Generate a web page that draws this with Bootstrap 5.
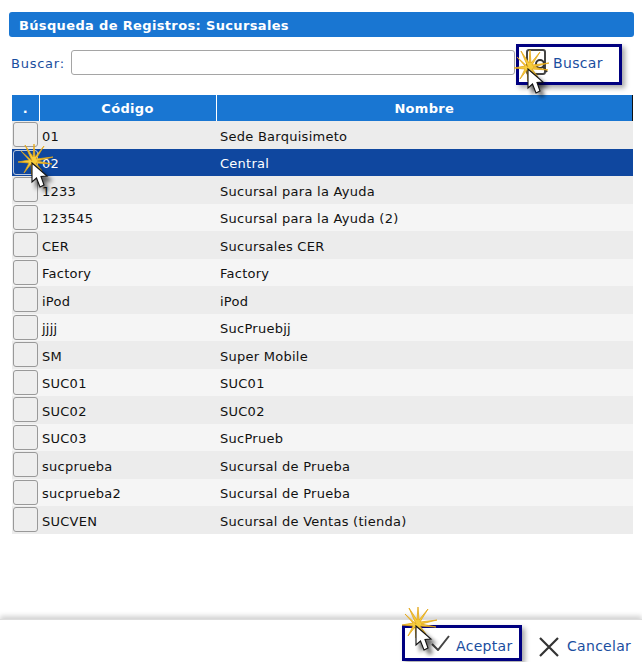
<!DOCTYPE html>
<html lang="es"><head><meta charset="utf-8"><title>Búsqueda</title>
<link href="https://cdn.jsdelivr.net/npm/bootstrap@5.3.0/dist/css/bootstrap.min.css" rel="stylesheet">
<style>
html,body{height:662px;overflow:hidden;background:#fff}
body{font-family:"DejaVu Sans",Verdana,sans-serif;font-size:13px;color:#111;position:relative}
.title-bar{margin:12px 8px 0 9px;height:25px;background:#1976d2;color:#fff;font-weight:700;font-size:13px;line-height:27px;padding-left:10px;border-radius:3px;letter-spacing:.35px}
.search-row{height:58px;padding:7px 20px 0 11px}
.search-label{color:#1a4ea0;width:60px;letter-spacing:.75px;margin-top:10px}
.search-input{width:445px;height:25px;margin-top:6px;border:1px solid #a5a5a5;border-radius:3px;background:#fff;padding:0 4px}
.focus-btn{background:#fff;border:3px solid #000080;border-radius:0;box-shadow:3px 3px 5px rgba(0,0,0,.35);color:#1a4ea0;font-size:14px;padding:0;letter-spacing:.3px}
.buscar-btn{width:106px;height:41px;justify-content:flex-start;padding:0 0 2px 34px;margin-left:1px}
.magnifier{position:absolute;left:6px;top:2px}
.grid-wrap{margin:0 9px 0 12px}
.data-grid{width:621px;border-collapse:collapse;table-layout:fixed;margin:0}
.data-grid th{background:#1976d2;color:#fff;font-weight:700;text-align:center;height:26px;padding:2px 0 0;border-right:1px solid #fff;letter-spacing:.3px}
.data-grid th:last-child{border-right:1px solid #111}
.data-grid td{height:27.5px;padding:3px 0 0 3px;vertical-align:middle;white-space:nowrap;letter-spacing:.26px}
.data-grid td:last-child{padding-left:4px}
.data-grid tr:nth-child(odd) td{background:#ececec}
.data-grid tr:nth-child(even) td{background:#f5f5f5}
.data-grid tr.row-picked td{background:#0f479f;color:#fff}
.data-grid td:first-child{padding:0 0 0 1px}
.row-check{display:block;width:25px;height:25px;background:#eee;border:1px solid #999;border-radius:3px}
.row-picked .row-check{background:#0f479f;border-color:#b9c6dc}
.footer-zone{position:absolute;left:0;right:0;top:619px;height:43px;border-top:1px solid #ddd;box-shadow:0 -3px 5px rgba(0,0,0,.18);background:#fff;padding:5px 10px 0 402px}
.aceptar-btn{width:120px;height:36px;padding:6px 0 0 26px;justify-content:flex-start;gap:6px}
.aceptar-btn svg{margin-top:-6px}
.cancel-btn{background:none;border:0;color:#1a4ea0;font-size:14px;letter-spacing:.3px;padding:0;margin:11px 0 0 17px;gap:8px}
.click-mark{position:absolute;pointer-events:none}
</style></head><body>
<svg width="0" height="0" class="position-absolute"><defs>
<filter id="soft" x="-50%" y="-50%" width="200%" height="200%"><feGaussianBlur stdDeviation="2"/></filter>
<symbol id="clickmark" viewBox="0 0 40 50">
<path d="M14 17 L7 1 L15 13 L16 0 L17 13 L26 2 L18 15 L35 13 L19 17 L34 20 L18 19 L24 27 L15 20 L14 31 L13 20 L6 29 L11 19 L0 18 L11 16 L3 7 Z" fill="#f6cc3c" stroke="#e3a616" stroke-width=".8"/>
<path d="M16 21 L18 46 L22 40 L27 48 L31 46 L27 38 L35 37 Z" fill="#000" opacity=".6" filter="url(#soft)"/>
<path d="M14 19 L14 38 L18.500 34 L22 43 L26 41 L23 32.500 L29 32 Z" fill="#fff" stroke="#111" stroke-width="1.1"/>
</symbol></defs></svg>

<div class="title-bar">Búsqueda de Registros: Sucursales</div>
<div class="search-row d-flex align-items-start">
  <label class="search-label" for="q">Buscar:</label>
  <input id="q" class="search-input" type="text">
  <button class="focus-btn buscar-btn d-flex align-items-center position-relative" type="button">
    <svg class="magnifier" width="24" height="28" viewBox="0 0 24 28"><rect x="2" y="1" width="18" height="24" rx="2" fill="none" stroke="#444" stroke-width="2"/><circle cx="15" cy="15" r="4" fill="none" stroke="#333" stroke-width="2"/><path d="M18 18l4 5" stroke="#333" stroke-width="2"/></svg>
    Buscar
  </button>
</div>
<div class="grid-wrap">
<table class="data-grid">
<colgroup><col style="width:27px"><col style="width:177px"><col></colgroup>
<thead><tr><th>.</th><th>Código</th><th>Nombre</th></tr></thead>
<tbody>
<tr><td><span class="row-check"></span></td><td>01</td><td>Sede Barquisimeto</td></tr>
<tr class="row-picked"><td><span class="row-check"></span></td><td>02</td><td>Central</td></tr>
<tr><td><span class="row-check"></span></td><td>1233</td><td>Sucursal para la Ayuda</td></tr>
<tr><td><span class="row-check"></span></td><td>123545</td><td>Sucursal para la Ayuda (2)</td></tr>
<tr><td><span class="row-check"></span></td><td>CER</td><td>Sucursales CER</td></tr>
<tr><td><span class="row-check"></span></td><td>Factory</td><td>Factory</td></tr>
<tr><td><span class="row-check"></span></td><td>iPod</td><td>iPod</td></tr>
<tr><td><span class="row-check"></span></td><td>jjjj</td><td>SucPruebjj</td></tr>
<tr><td><span class="row-check"></span></td><td>SM</td><td>Super Mobile</td></tr>
<tr><td><span class="row-check"></span></td><td>SUC01</td><td>SUC01</td></tr>
<tr><td><span class="row-check"></span></td><td>SUC02</td><td>SUC02</td></tr>
<tr><td><span class="row-check"></span></td><td>SUC03</td><td>SucPrueb</td></tr>
<tr><td><span class="row-check"></span></td><td>sucprueba</td><td>Sucursal de Prueba</td></tr>
<tr><td><span class="row-check"></span></td><td>sucprueba2</td><td>Sucursal de Prueba</td></tr>
<tr><td><span class="row-check"></span></td><td>SUCVEN</td><td>Sucursal de Ventas (tienda)</td></tr>
</tbody></table>
</div>
<div class="footer-zone d-flex align-items-start">
  <button class="focus-btn aceptar-btn d-flex align-items-center" type="button">
    <svg width="19" height="16" viewBox="0 0 19 16"><path d="M1 9l6 6L18 1" fill="none" stroke="#444" stroke-width="2"/></svg>Aceptar
  </button>
  <button class="cancel-btn d-flex align-items-center" type="button">
    <svg width="20" height="20" viewBox="0 0 20 20"><path d="M1 1l18 18M19 1L1 19" fill="none" stroke="#333" stroke-width="2.2"/></svg>Cancelar
  </button>
</div>
<svg class="click-mark" style="left:514px;top:50px" width="40" height="50"><use href="#clickmark"/></svg>
<svg class="click-mark" style="left:18px;top:144px" width="40" height="50"><use href="#clickmark"/></svg>
<svg class="click-mark" style="left:402px;top:607px" width="40" height="50"><use href="#clickmark"/></svg>
<script src="https://cdn.jsdelivr.net/npm/bootstrap@5.3.0/dist/js/bootstrap.bundle.min.js"></script>
</body></html>
